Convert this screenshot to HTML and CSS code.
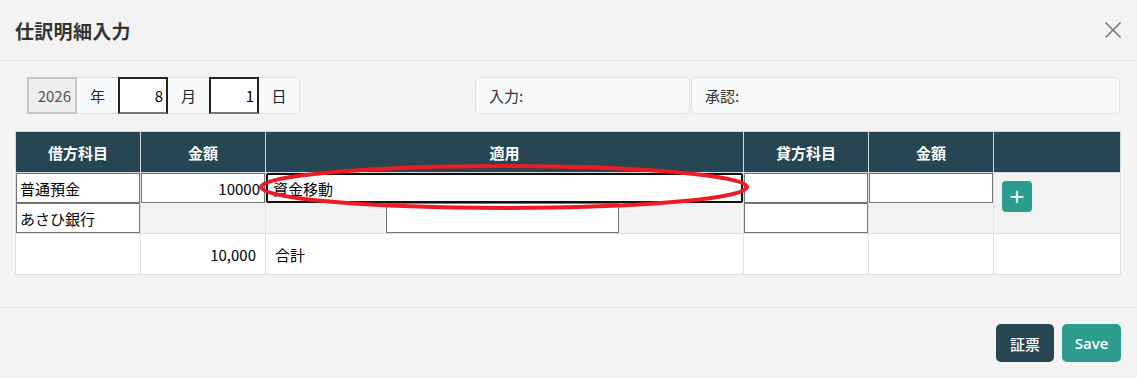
FILE: index.html
```html
<!DOCTYPE html>
<html lang="ja">
<head>
<meta charset="utf-8">
<title>仕訳明細入力</title>
<link rel="stylesheet" href="styles.css">
</head>
<body>
<div class="modal">
  <header class="modal-header">
    <h1 class="title">仕訳明細入力</h1>
    <button class="close" aria-label="close">
      <svg width="18" height="18" viewBox="0 0 18 18"><path d="M1.5 1.5 L16.5 16.5 M16.5 1.5 L1.5 16.5" stroke="#777" stroke-width="1.6" fill="none"/></svg>
    </button>
  </header>
  <main class="modal-body">
    <div class="top-row">
      <div class="date-area">
        <div class="date-group">
          <input class="d-year" type="text" value="2026" readonly>
          <span class="d-label">年</span>
          <input class="d-num" type="text" value="8">
          <span class="d-label">月</span>
          <input class="d-num" type="text" value="1">
          <span class="d-label d-last">日</span>
        </div>
      </div>
      <div class="info info-input">入力:</div>
      <div class="info info-approve">承認:</div>
    </div>
    <table class="journal">
      <colgroup>
        <col class="c-acc"><col class="c-amt"><col class="c-desc"><col class="c-acc"><col class="c-amt"><col class="c-act">
      </colgroup>
      <thead>
        <tr><th>借方科目</th><th>金額</th><th>適用</th><th>貸方科目</th><th>金額</th><th></th></tr>
      </thead>
      <tbody>
        <tr class="entry">
          <td><input class="cell-in" type="text" value="普通預金"><input class="cell-in" type="text" value="あさひ銀行"></td>
          <td><input class="cell-in num" type="text" value="10000"></td>
          <td><input class="cell-in focus" type="text" value="資金移動"><input class="cell-in sub" type="text" value=""></td>
          <td><input class="cell-in" type="text" value=""><input class="cell-in" type="text" value=""></td>
          <td><input class="cell-in num" type="text" value=""></td>
          <td class="act"><button class="add">+</button></td>
        </tr>
        <tr class="total">
          <td></td>
          <td class="num">10,000</td>
          <td>合計</td>
          <td></td><td></td><td></td>
        </tr>
      </tbody>
    </table>
  </main>
  <footer class="modal-footer">
    <button class="btn btn-dark">証票</button>
    <button class="btn btn-teal">Save</button>
  </footer>
</div>
<svg class="mark" width="500" height="52" viewBox="0 0 500 52"><ellipse cx="246" cy="24" rx="243" ry="21" fill="none" stroke="#ed1c24" stroke-width="4"/></svg>
</body>
</html>
```
FILE: styles.css
```css
* { box-sizing: border-box; }
html, body { margin: 0; padding: 0; }
body {
  background: #f3f3f3;
  font-family: "Noto Sans CJK JP", "Noto Sans", sans-serif;
  color: #212529;
  width: 1137px;
  height: 378px;
  overflow: hidden;
  position: relative;
}
.modal { width: 1137px; height: 378px; display: flex; flex-direction: column; }
.modal-header {
  height: 61px;
  border-bottom: 1px solid #dee2e6;
  display: flex;
  align-items: center;
  justify-content: space-between;
  padding: 0 14px 0 15px;
}
.title { margin: 0; font-size: 19px; font-weight: 700; color: #333; letter-spacing: 0.3px; }
.close { background: none; border: 0; padding: 0; width: 20px; height: 20px; display: flex; align-items: center; justify-content: center; }
.modal-body { padding: 16px 17px 0 15px; }
.top-row { display: flex; height: 37px; }
.date-area { width: 460px; padding-left: 12px; }
.date-group { display: flex; height: 37px; }
.date-group input { font-family: inherit; font-size: 15px; text-align: right; height: 37px; margin: 0; }
.d-year {
  width: 50px; padding: 0 4px 0 0; background: #efefef; color: #555;
  border: 2px solid #c6c6c6;
}
.d-num {
  width: 50px; padding: 0 3px 0 0; background: #fff; color: #000;
  border: 2px solid #222; border-bottom-color: #767676;
}
.d-label {
  width: 41px; display: flex; align-items: center; justify-content: center;
  background: #f8f9fa; border: 1px solid #dee2e6; border-left: 0; border-right: 0; font-size: 15px; color: #212529;
}
.d-last { border-right: 1px solid #dee2e6; border-radius: 0 5px 5px 0; }
.info {
  background: #f8f9fa; border: 1px solid #dee2e6; border-radius: 5px;
  display: flex; align-items: center; padding-left: 13px; font-size: 15px; color: #333;
}
.info-input { width: 215px; }
.info-approve { flex: 1; margin-left: 1px; padding-left: 13px; }
.journal {
  margin-top: 17px;
  width: 1105px;
  border-collapse: collapse;
  table-layout: fixed;
  font-size: 15px;
}
.c-acc, .c-amt { width: 125px; }
.c-desc { width: 478px; }
.c-act { width: 127px; }
.journal th {
  background: #264653; color: #fff; font-weight: 700; height: 41px;
  border: 1px solid #d6d9dc; font-size: 15px; padding: 0;
}
.journal td { border: 1px solid #dee2e6; padding: 0; vertical-align: top; }
.entry td { background: #f2f2f2; }
.cell-in {
  display: block; width: 100%; height: 30px; margin: 0;
  border: 1px solid #767676; background: #fff;
  font-family: inherit; font-size: 15px; color: #000; padding: 0 3px;
}
.cell-in.num { text-align: right; padding-right: 4px; }
.cell-in.focus { border: 2px solid #111; border-radius: 2px; padding-left: 5px; }
.cell-in.sub { width: 233px; margin-left: 120px; }
.act { padding: 8px 0 0 8px !important; }
.add {
  width: 30px; height: 31px; border: 0; border-radius: 4px; background: #2a9d8f; color: #fff;
  font-size: 20px; line-height: 1; padding: 0 0 2px; font-family: "DejaVu Sans", sans-serif;
}
.total td { background: #fff; height: 41px; vertical-align: middle; padding: 0 9px; color: #000; }
.total td.num { text-align: right; }
.modal-footer {
  margin-top: 32px;
  border-top: 1px solid #dee2e6;
  flex: 1;
  display: flex; justify-content: flex-end; align-items: flex-start;
  padding: 16px 16px 0 0; gap: 8px;
}
.btn {
  height: 38px; border: 0; border-radius: 5px; color: #fff; font-size: 15px;
  font-family: "Open Sans", "Noto Sans CJK JP", sans-serif; font-weight: 600;
}
.btn-dark { background: #264653; width: 58px; font-family: "Noto Sans CJK JP", sans-serif; font-weight: 500; }
.btn-teal { background: #2a9d8f; width: 59px; }
.mark { position: absolute; left: 258px; top: 163px; pointer-events: none; }
```
